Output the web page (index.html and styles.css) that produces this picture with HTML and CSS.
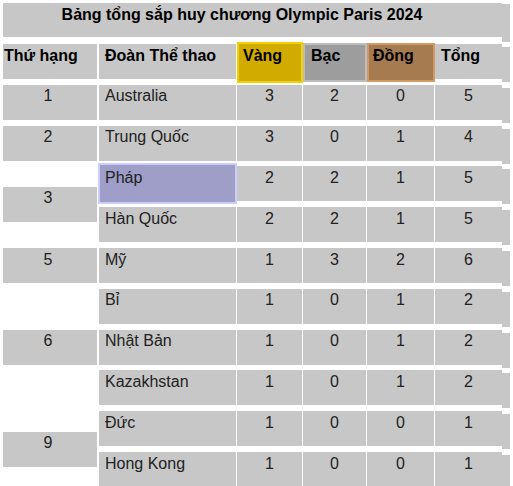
FILE: index.html
```html
<!DOCTYPE html>
<html lang="vi">
<head>
<meta charset="utf-8">
<title>Bảng tổng sắp huy chương Olympic Paris 2024</title>
<link rel="stylesheet" href="styles.css">
</head>
<body>
<div class="board">
  <div class="title">Bảng tổng sắp huy chương Olympic Paris 2024</div>
  <div class="grid">
    <div class="cell head rank-h">Thứ hạng</div>
    <div class="cell head name">Đoàn Thể thao</div>
    <div class="cell head gold">Vàng</div>
    <div class="cell head silver">Bạc</div>
    <div class="cell head bronze">Đồng</div>
    <div class="cell head tot">Tổng</div>

    <div class="cell rank">1</div>
    <div class="cell name">Australia</div>
    <div class="cell num">3</div>
    <div class="cell num">2</div>
    <div class="cell num">0</div>
    <div class="cell num tot">5</div>

    <div class="cell rank">2</div>
    <div class="cell name">Trung Quốc</div>
    <div class="cell num">3</div>
    <div class="cell num">0</div>
    <div class="cell num">1</div>
    <div class="cell num tot">4</div>

    <div class="cell rank span2">3</div>
    <div class="cell name hl">Pháp</div>
    <div class="cell num">2</div>
    <div class="cell num">2</div>
    <div class="cell num">1</div>
    <div class="cell num tot">5</div>

    <div class="cell name">Hàn Quốc</div>
    <div class="cell num">2</div>
    <div class="cell num">2</div>
    <div class="cell num">1</div>
    <div class="cell num tot">5</div>

    <div class="cell rank">5</div>
    <div class="cell name">Mỹ</div>
    <div class="cell num">1</div>
    <div class="cell num">3</div>
    <div class="cell num">2</div>
    <div class="cell num tot">6</div>

    <div class="blank"></div>
    <div class="cell name">Bỉ</div>
    <div class="cell num">1</div>
    <div class="cell num">0</div>
    <div class="cell num">1</div>
    <div class="cell num tot">2</div>

    <div class="cell rank">6</div>
    <div class="cell name">Nhật Bản</div>
    <div class="cell num">1</div>
    <div class="cell num">0</div>
    <div class="cell num">1</div>
    <div class="cell num tot">2</div>

    <div class="blank"></div>
    <div class="cell name">Kazakhstan</div>
    <div class="cell num">1</div>
    <div class="cell num">0</div>
    <div class="cell num">1</div>
    <div class="cell num tot">2</div>

    <div class="cell rank span2">9</div>
    <div class="cell name">Đức</div>
    <div class="cell num">1</div>
    <div class="cell num">0</div>
    <div class="cell num">0</div>
    <div class="cell num tot">1</div>

    <div class="cell name">Hong Kong</div>
    <div class="cell num">1</div>
    <div class="cell num">0</div>
    <div class="cell num">0</div>
    <div class="cell num tot">1</div>
  </div>
</div>
</body>
</html>
```
FILE: styles.css
```css
html, body {
  margin: 0;
  overflow: hidden;
}

body {
  padding: 3px;
  background: #ffffff;
  color: #222222;
  font-family: "Liberation Sans", Arial, sans-serif;
  font-size: 16px;
  line-height: 18px;
}

.board {
  width: 499px;
}

.title {
  position: relative;
  height: 34px;
  box-sizing: border-box;
  padding: 2.5px 21px 0 0;
  text-align: center;
  font-weight: bold;
  color: #000000;
  background: #c7c7c7;
}

.title::after {
  content: "";
  position: absolute;
  left: 100%;
  top: 1px;
  bottom: -5px;
  width: 8px;
  background: #c7c7c7;
}

.grid {
  display: grid;
  margin-top: 7px;
  grid-template-columns: 94px 138px 65px 63px 67px 67px;
  grid-template-rows: 35.1px repeat(10, 35px);
  column-gap: 1px;
  row-gap: 5.8px;
}

.cell {
  box-sizing: border-box;
  background: #c7c7c7;
  padding: 2.5px 0 0 6px;
  white-space: nowrap;
}

.head {
  font-weight: bold;
  color: #000000;
}

.rank-h {
  padding-left: 1px;
}

.rank,
.num {
  padding-left: 0;
  text-align: center;
}

.rank {
  padding-right: 4px;
}

.rank.span2 {
  grid-row: span 2;
  align-self: center;
  height: 35px;
}

.name {
  margin-left: 1px;
}

.tot {
  position: relative;
}

.tot::after {
  content: "";
  position: absolute;
  left: 100%;
  top: 3px;
  bottom: -3px;
  width: 8px;
  background: #c7c7c7;
}

.gold {
  background: #d2ab00;
  border: 2px solid #f3d000;
  margin: -2px -1px -4px 0;
  padding: 2.5px 0 0 4px;
}

.silver {
  background: #9d9d9d;
  border: 2px solid #bdbdbd;
  margin: -1px -1px -3px 0;
  padding: 1.5px 0 0 6px;
}

.bronze {
  background: #a77b50;
  border: 2px solid #cf9a66;
  margin: -1px -1px -3px 0;
  padding: 1.5px 0 0 4px;
}

.hl {
  background: #9e9ec9;
  border: 2px solid #cdcdfd;
  margin: -3px -1px -3px 0;
  padding: 3.3px 0 0 5px;
}
```
